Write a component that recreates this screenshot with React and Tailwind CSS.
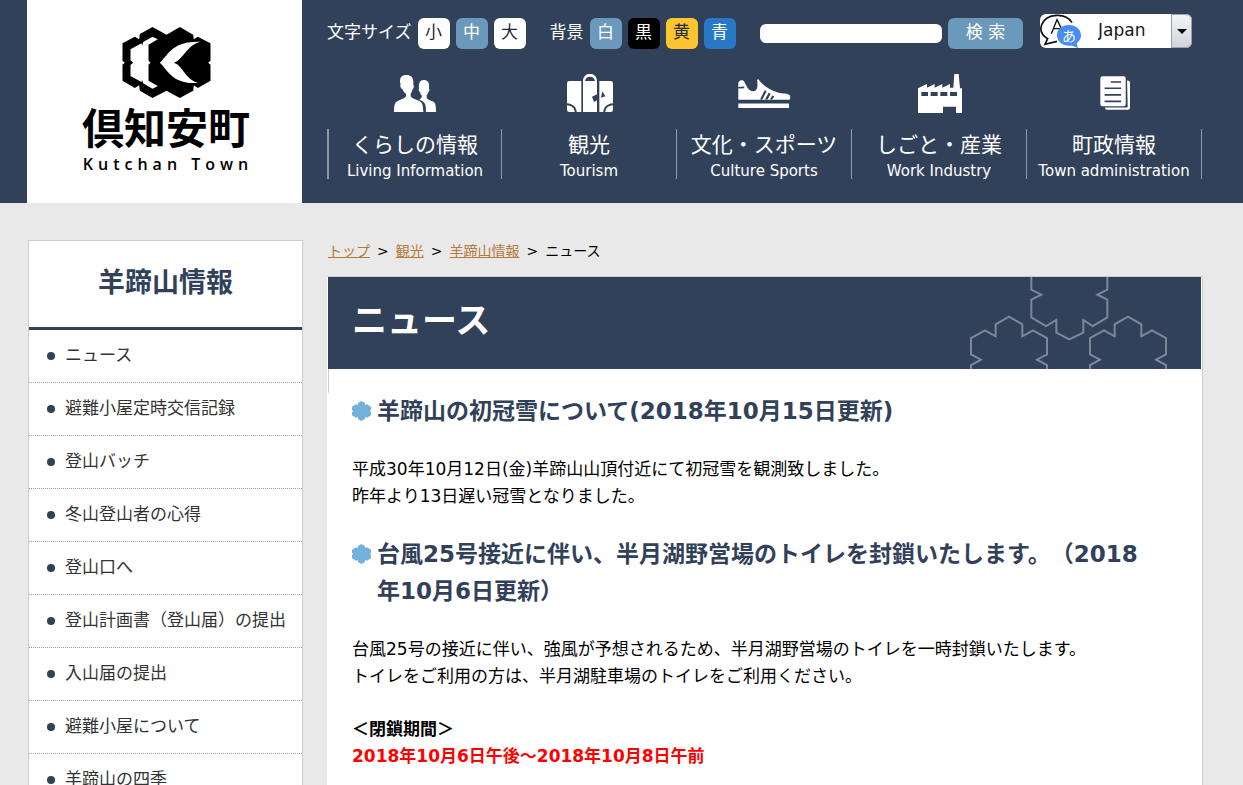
const sizes = [
  { label: "小", className: "bg-white text-gray-800" },
  { label: "中", className: "bg-[#6b99bb] text-white" },
  { label: "大", className: "bg-white text-gray-800" },
];

const backgrounds = [
  { label: "白", className: "bg-[#6b99bb] text-white" },
  { label: "黒", className: "bg-black text-white" },
  { label: "黄", className: "bg-[#ffc531] text-gray-800" },
  { label: "青", className: "bg-[#2779c8] text-white" },
];

const menu = [
  "ニュース",
  "避難小屋定時交信記録",
  "登山バッチ",
  "冬山登山者の心得",
  "登山口へ",
  "登山計画書（登山届）の提出",
  "入山届の提出",
  "避難小屋について",
  "羊蹄山の四季",
];

function PeopleIcon() {
  return (
    <svg viewBox="222 42 126 111" className="h-[37px] w-[42px]" fill="white" aria-hidden="true">
      <path d="M259 42c14 0 21 8 21 20v10c3 0 2 10-2 12-2 8-4 11-6 14v8c3 6 11 8 20 12 14 5 17 9 18 35H222c0-24 3-30 16-35 9-4 17-6 20-12v-8c-4-3-8-6-11-14-5-2-8-12-5-13l-2-9c-1-12 6-20 19-20z" />
      <path d="M311 57c11 0 17 7 16 17v9c3 1 1 8-2 10-1 5-3 8-5 10v7c3 6 9 7 16 10 10 4 12 10 12 33h-30c0-20-2-27-12-33-4-2-7-4-9-5 5-2 8-4 8-8v-4c-3-2-4-5-5-10-4-2-5-9-3-10-2-17 3-26 14-26z" />
    </svg>
  );
}

function SuitcaseIcon() {
  return (
    <svg viewBox="741 42 138 114" className="h-[38px] w-[46px]" fill="white" aria-hidden="true">
      <path d="M748 63h36v93h-14c0-13-11-25-29-26V70q0-7 7-7z" />
      <path d="M838 63h34q7 0 7 7v60c-18 1-29 13-29 26h-12z" />
      <path fillRule="evenodd" d="M789 156V64c0-30 42-30 42 0v92zM795 63h30c-2-17-28-17-30 0z" />
      <path d="M741 136c14 1 23 9 23 20h-16q-7 0-7-7zM879 136c-14 1-23 9-23 20h16q7 0 7-7z" />
      <path d="M816 110l15-7v18l-9 5zM847 94l9 15-13 4z" fill="#32415a" />
    </svg>
  );
}

function ShoeIcon() {
  return (
    <svg viewBox="0 0 159 88" className="h-[29px] w-[53px]" fill="white" aria-hidden="true">
      <path d="M0 63V12C2 3 13 1 18 8c7 12 12 28 27 29 13 1 15-14 12-33l3-4c14 20 38 34 60 41 15 4 30 2 37 9 1 5 1 9-1 13z" />
      <path d="M0 74h154v14H0z" />
      <path d="M0 24l18-1v5L0 29zM66 62l14-28 6 3-13 25zM81 62l11-20 6 3-9 17zM96 62l7-12 6 3-6 9z" fill="#32415a" />
    </svg>
  );
}

function FactoryIcon() {
  return (
    <svg viewBox="477 39 132 117" className="h-[39px] w-[44px]" fill="white" aria-hidden="true">
      <path fillRule="evenodd" d="M477 156V82l27-13v11l23-11v11l23-11v11l23-11v11h10l3-41h13l4 43h6v74h-18v-19h-39v19zM487 93v12h20V93zM515 93v12h21V93zM544 93v12h21V93zM573 93v12h21V93z" />
    </svg>
  );
}

function PapersIcon() {
  return (
    <svg viewBox="1019 45 91 102" className="h-[34px] w-[30px]" fill="white" aria-hidden="true">
      <path fillRule="evenodd" d="M1026 45h65q6 0 6 7v77q0 7-6 7h-65q-6 0-6-7V52q0-7 6-7zM1052 60v5h31v-5zM1033 79v5h50v-5zM1033 99v5h50v-5zM1033 119v5h50v-5z" />
      <path d="M1101 58q9 0 9 7v76q0 6-6 6h-64q-6 0-6-7h66q3 0 3-3z" />
    </svg>
  );
}

const nav = [
  { ja: "くらしの情報", en: "Living Information", Icon: PeopleIcon },
  { ja: "観光", en: "Tourism", Icon: SuitcaseIcon },
  { ja: "文化・スポーツ", en: "Culture Sports", Icon: ShoeIcon },
  { ja: "しごと・産業", en: "Work Industry", Icon: FactoryIcon },
  { ja: "町政情報", en: "Town administration", Icon: PapersIcon },
];

function Logo() {
  return (
    <a href="#" className="flex h-[203px] w-[275px] shrink-0 flex-col items-center bg-white pt-[27px] pl-[3px] text-black">
      <svg viewBox="287 81 266 213" className="h-[71px] w-[89px]" aria-hidden="true">
        <path d="M288 130l37-20 13 8 2-16 38-21 42 23 40-23 40 23 2 14 12-8 38 20v52l-7 6 7 6v48l-38 22-12-8-2 16-40 22-40-22-42 22-38-22-2-16-13 8-37-22v-48l7-6-7-6z" />
        <path
          d="M312 148l33-18 2 7 3-11 28-16 16 8-28 16v48l6 6-6 6v48l28 16-16 8-28-16-3-10-2 6-33-18v-33l8-7-8-7zM400 188C430 158 440 123 522 125C480 135 470 180 442 188C470 196 475 240 518 249C440 253 430 218 400 188z"
          fill="white"
        />
      </svg>
      <span className="mt-[9px] text-[42px] leading-[46px] font-bold">倶知安町</span>
      <span className="mt-px pl-1 font-['Open_Sans',sans-serif] text-base leading-5 font-semibold tracking-[5px]">Kutchan Town</span>
    </a>
  );
}

function ToolButtons({ label, items }) {
  return (
    <div className="flex shrink-0 items-center gap-[6px]">
      <span className="text-[17px] whitespace-nowrap">{label}</span>
      {items.map((item) => (
        <button key={item.label} type="button" className={`h-[31px] w-8 shrink-0 rounded-md text-[17px] ${item.className}`}>
          {item.label}
        </button>
      ))}
    </div>
  );
}

function LanguageSelect() {
  return (
    <div className="relative mb-1 h-[34px] w-[152px]">
      <select
        aria-label="Language"
        className="h-full w-full appearance-none rounded-md bg-white pl-[58px] text-[17px] text-gray-900"
      >
        <option>Japan</option>
      </select>
      <svg viewBox="0 0 126 102" className="pointer-events-none absolute top-0 left-0 h-[34px] w-[42px]" aria-hidden="true">
        <path d="M96 26C78-4 20-4 5 32c-7 20 4 34 18 42l-8 17 36-9" fill="none" stroke="#111" strokeWidth="5" />
        <path d="M34 59l17-42 15 30M40 44h22" fill="none" stroke="#111" strokeWidth="4" />
        <path d="M86 33c22 0 37 14 37 31 0 12-8 20-13 24l4 14-17-7c-28 4-46-12-46-31s15-31 35-31z" fill="#468cf5" />
        <text x="66" y="81" fontSize="42" fill="white">あ</text>
      </svg>
      <span className="pointer-events-none absolute inset-y-0 right-0 flex w-[21px] items-center justify-center rounded-r-md border border-gray-400 bg-linear-to-b from-gray-100 to-gray-300">
        <svg viewBox="0 0 10 5" className="h-[5px] w-[10px]" aria-hidden="true">
          <path d="M0 0h10L5 5z" />
        </svg>
      </span>
    </div>
  );
}

function Header() {
  return (
    <header className="flex gap-[25px] bg-[#32415a] pr-[41px] pl-[27px] text-white">
      <Logo />
      <div className="min-w-0 flex-1">
        <div className="flex h-[52px] items-center pt-[14px]">
          <ToolButtons label="文字サイズ" items={sizes} />
          <div className="ml-6 shrink-0">
            <ToolButtons label="背景" items={backgrounds} />
          </div>
          <form className="ml-6 flex min-w-0 flex-1 items-center gap-[6px]">
            <input type="search" aria-label="サイト内検索" className="h-[19px] w-0 min-w-0 flex-1 rounded-md bg-white px-2 text-sm text-black" />
            <button type="button" className="h-[31px] w-[75px] shrink-0 rounded-md bg-[#6b99bb] text-[17px]">
              検 索
            </button>
          </form>
          <div className="shrink-0 pr-[10px] pl-[17px]">
            <LanguageSelect />
          </div>
        </div>
        <nav className="mt-5 flex">
          {nav.map(({ ja, en, Icon }) => (
            <a key={ja} href="#" className="group flex-1 text-center">
              <span className="flex h-[42px] items-center justify-center">
                <Icon />
              </span>
              <span className="mt-[15px] flex h-[50px] flex-col border-r border-[#8f98a6] pt-px whitespace-nowrap group-first:border-l-2">
                <span className="text-[21px] leading-[30px]">{ja}</span>
                <span className="text-[15px] leading-[22px]">{en}</span>
              </span>
            </a>
          ))}
        </nav>
      </div>
    </header>
  );
}

function Sidebar() {
  return (
    <aside className="w-[276px] shrink-0 pt-[37px]">
      <div className="ml-px border border-[#ccc] bg-white">
        <h2 className="border-b-3 border-[#32415a] pt-[22px] pb-6 text-center text-[27px] leading-10 font-bold text-[#32415a]">
          羊蹄山情報
        </h2>
        <ul>
          {menu.map((item) => (
            <li key={item} className="border-b border-dotted border-gray-400">
              <a href="#" className="flex h-[52px] items-center gap-[10px] pl-[18px] text-[17px] whitespace-nowrap text-[#333]">
                <span className="size-2 rounded-full bg-[#32415a]" />
                {item}
              </a>
            </li>
          ))}
        </ul>
      </div>
    </aside>
  );
}

function Breadcrumb() {
  return (
    <nav className="flex gap-[7px] pl-px text-sm leading-5 text-black">
      {["トップ", "観光", "羊蹄山情報"].map((item) => (
        <span key={item} className="flex gap-[7px]">
          <a href="#" className="text-[#b47a3c] underline">
            {item}
          </a>
          <span>&gt;</span>
        </span>
      ))}
      <span>ニュース</span>
    </nav>
  );
}

const flake = "M63 312V300L93 284L63 268V219L105 196L137 214V178L177 155L217 178V214L249 196L291 219V268L261 284L291 300V312";

function SnowPattern() {
  return (
    <svg viewBox="60 36 597 276" className="absolute right-8 bottom-0 h-[92px] w-[199px]" fill="none" stroke="#7c879a" strokeWidth="6" aria-hidden="true">
      <path d="M244 36V74L274 89L244 104V157L288 183L319 165V203L358 223L400 203V165L428 183L472 157V104L442 89L472 74V36" />
      <path d={flake} />
      <path d={flake} transform="translate(357 0)" />
    </svg>
  );
}

function SectionTitle({ children }) {
  return (
    <h2 className="flex gap-[6px] text-[23px] leading-[37px] font-bold text-[#32415a]">
      <svg viewBox="0 0 57 60" className="mt-2 h-5 w-[19px] shrink-0" fill="#71b1dc" aria-hidden="true">
        <path d="M28 0l11 6v6l6-2 12 7v10l-4 3 4 3v10l-12 7-6-2v6l-11 6-10-6v-6l-6 2-12-7V33l4-3-4-3V17l12-7 6 2V6z" />
      </svg>
      <span>{children}</span>
    </h2>
  );
}

function Article() {
  return (
    <main className="flex min-w-0 flex-1 flex-col pt-[38px]">
      <Breadcrumb />
      <div className="mt-[15px] flex-1 border-t border-r border-[#ccc] bg-white">
        <div className="mx-px border-l border-[#ccc] pb-6">
          <h1 className="relative -ml-px bg-[#32415a] pt-[18px] pb-[22px] pl-6 text-[35px] leading-[52px] font-bold text-white">
            ニュース
            <SnowPattern />
          </h1>
        </div>
        <div className="space-y-[26px] pr-[42px] pl-[25px] text-[17px] leading-[27px] text-black">
          <SectionTitle>羊蹄山の初冠雪について(2018年10月15日更新)</SectionTitle>
          <p>
            平成30年10月12日(金)羊蹄山山頂付近にて初冠雪を観測致しました。
            <br />
            昨年より13日遅い冠雪となりました。
          </p>
          <SectionTitle>台風25号接近に伴い、半月湖野営場のトイレを封鎖いたします。（2018年10月6日更新）</SectionTitle>
          <p>
            台風25号の接近に伴い、強風が予想されるため、半月湖野営場のトイレを一時封鎖いたします。
            <br />
            トイレをご利用の方は、半月湖駐車場のトイレをご利用ください。
          </p>
          <p className="font-bold">
            ＜閉鎖期間＞
            <br />
            <span className="text-[#f00]">2018年10月6日午後～2018年10月8日午前</span>
          </p>
        </div>
      </div>
    </main>
  );
}

export default function App() {
  return (
    <div
      lang="ja"
      className="flex min-h-screen flex-col bg-[#e9e9e9] font-['DejaVu_Sans','Noto_Sans_CJK_JP',sans-serif] [text-spacing-trim:space-all]"
    >
      <Header />
      <div className="flex flex-1 gap-6 pr-[40px] pl-[27px]">
        <Sidebar />
        <Article />
      </div>
    </div>
  );
}
